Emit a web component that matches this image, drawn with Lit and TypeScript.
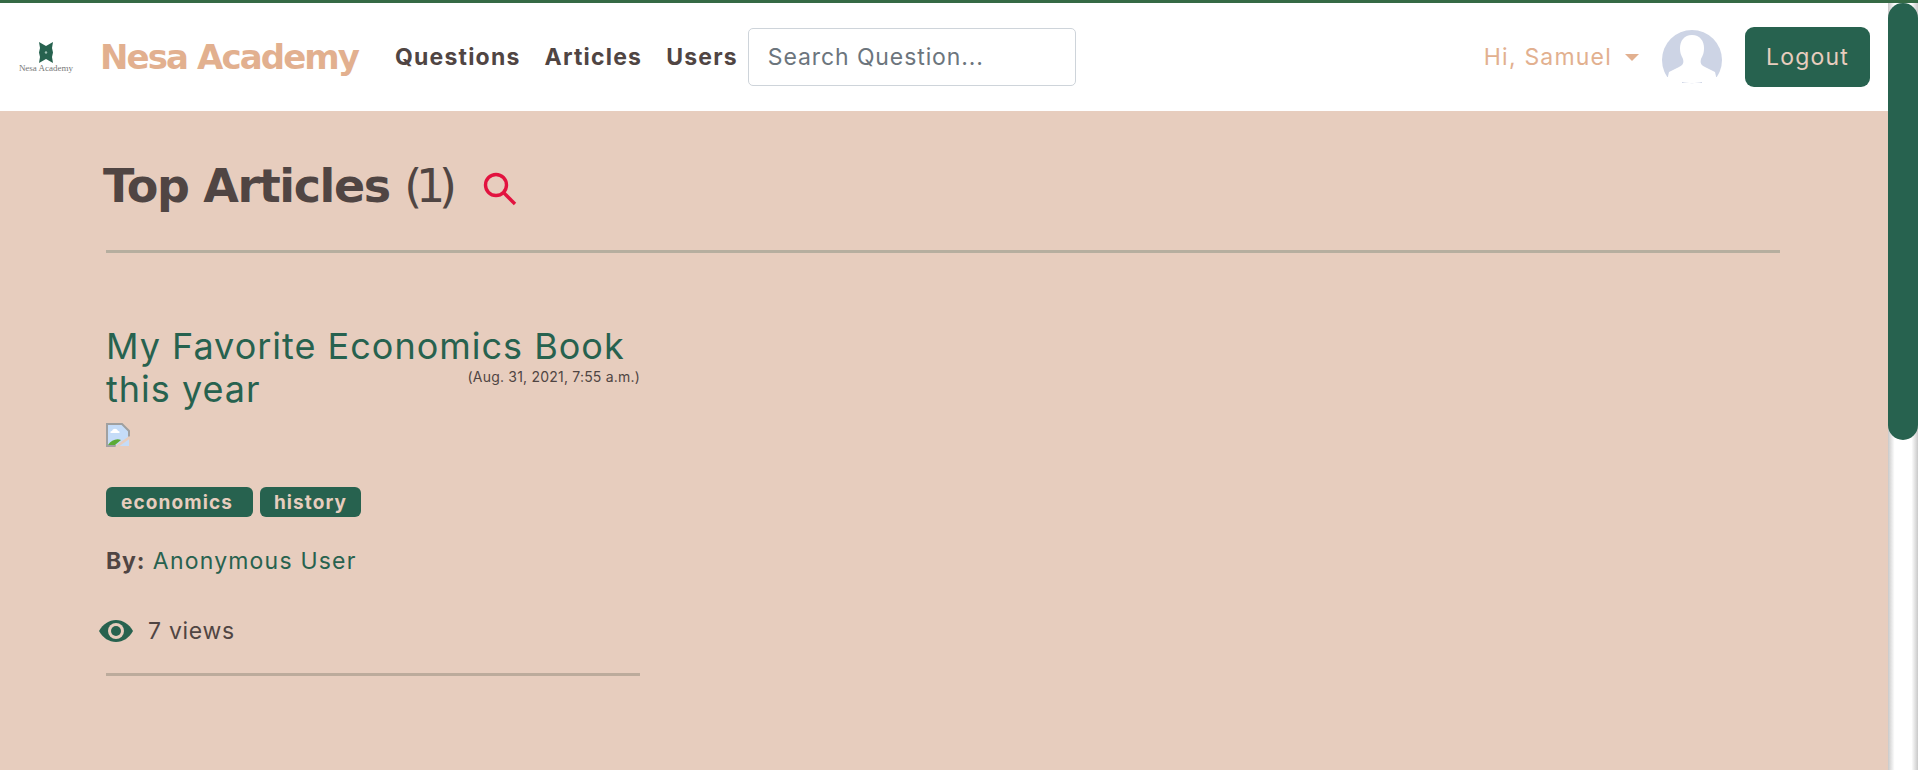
import { LitElement, html, css } from "lit";
import { customElement } from "lit/decorators.js";

@customElement("app-root")
export class AppRoot extends LitElement {
  static styles = css`
    :host { display: block; position: relative; width: 1918px; height: 770px; overflow: hidden; background: #e7cdbe; font-family: Inter, "Open Sans", sans-serif; color: #504543; }
    .top { height: 3px; background: #356a45; }
    nav { height: 108px; background: #fff; display: flex; align-items: center; padding: 0 48px 0 18px; box-sizing: border-box; }
    .logo { width: 56px; display: flex; flex-direction: column; align-items: center; margin-right: 26px; }
    .logo svg { display: block; }
    .logo span { font: 9px/10px "Liberation Serif", serif; color: #777; white-space: nowrap; }
    .brand { font: bold 34px/1 "DejaVu Sans", sans-serif; color: #e2b08f; width: 259px; margin-right: 36px; white-space: nowrap; letter-spacing: -1.9px; }
    .link { font-weight: 700; font-size: 23px; letter-spacing: 1.2px; color: #504543; margin-right: 24px; white-space: nowrap; }
    .link.last { margin-right: 10px; }
    .search { width: 328px; height: 58px; box-sizing: border-box; border: 1px solid #ced4da; border-radius: 5px; padding: 0 19px; display: flex; align-items: center; font-size: 23px; letter-spacing: 0.9px; color: #6c757d; }
    .spacer { flex: 1; }
    .hi { font-size: 23px; letter-spacing: 1.2px; color: #e2b08f; white-space: nowrap; display: flex; align-items: center; }
    .caret { width: 0; height: 0; border: 7px solid transparent; border-top-color: #e2b08f; border-bottom: 0; margin-left: 13px; }
    .avatar { margin: 0 23px 0 23px; display: block; }
    .logout { width: 125px; height: 60px; border-radius: 9px; background: #27624f; color: #e7cdbe; font-size: 23px; letter-spacing: 1.2px; display: flex; align-items: center; justify-content: center; }
    main { padding: 46px 138px 0 106px; }
    .head { display: flex; align-items: center; height: 64px; }
    h1 { margin: -7px 0 0 -3px; font: bold 46px/64px "DejaVu Sans", sans-serif; letter-spacing: -1.4px; color: #504543; white-space: nowrap; }
    h1 span { font-weight: normal; letter-spacing: -6.3px; margin-left: 0; }
    .head svg { margin-left: 32px; display: block; }
    .rule { height: 3px; background: #b6ae9f; }
    .head + .rule { margin-top: 29px; }
    article { width: 534px; margin-top: 72px; position: relative; }
    h2 { margin: 0; font-weight: 400; font-size: 36px; line-height: 43px; letter-spacing: 1px; color: #27624f; }
    .date { position: absolute; right: 0; top: 43px; font-size: 14px; line-height: 18px; letter-spacing: 0.2px; color: #504543; }
    .broken { display: block; margin-top: 12px; }
    .tags { display: flex; gap: 7px; margin-top: 40px; }
    .tag { height: 30px; border-radius: 6px; background: #27624f; color: #e7cdbe; font-weight: 700; font-size: 19px; letter-spacing: 1.1px; display: flex; align-items: center; justify-content: center; box-sizing: border-box; }
    .tag.wide { width: 147px; padding-right: 5px; }
    .tag.narrow { width: 101px; }
    .by { margin-top: 29px; font-size: 23px; line-height: 30px; letter-spacing: 1.2px; color: #27624f; }
    .by b { color: #504543; letter-spacing: 0.8px; }
    .views { display: flex; align-items: center; margin: 40px 0 0 -7px; font-size: 23px; line-height: 30px; letter-spacing: 0.7px; color: #504543; }
    .views svg { margin-right: 15px; display: block; }
    .views + .rule { margin-top: 27px; background: #bcab9c; }
    .track { position: absolute; top: 3px; right: 0; bottom: 0; width: 30px; background: linear-gradient(90deg, #c9c9c9, #fff 22%, #fff 78%, #c9c9c9); }
    .thumb { height: 437px; background: #27624f; border-radius: 15px; }
  `;

  render() {
    return html`
      <div class="top"></div>
      <nav>
        <div class="logo">
          <svg width="14" height="21" viewBox="0 0 14 21"><path fill="#27624f" d="M0 0L7 4 14 0 13 6 14 10.5 13 15 14 21 7 17 0 21 1 15 0 10.5 1 6z"/><circle cx="7" cy="10.5" r="1.2" fill="#9fc0b4"/></svg>
          <span>Nesa Academy</span>
        </div>
        <div class="brand">Nesa Academy</div>
        <div class="link">Questions</div>
        <div class="link">Articles</div>
        <div class="link last">Users</div>
        <div class="search">Search Question...</div>
        <div class="spacer"></div>
        <div class="hi">Hi, Samuel<i class="caret"></i></div>
        <svg class="avatar" width="60" height="56" viewBox="0 0 60 56">
          <defs><clipPath id="c"><path d="M0 0h60v48H0z"/></clipPath></defs>
          <circle cx="30" cy="31" r="30" fill="#cdd4e5" clip-path="url(#c)"/>
          <path fill="#fff" d="M30 6c8 0 12 6 12 13 0 5-1 7-3 11-1 4 0 6 4 8l10 5 3 13H4l3-13 10-5c4-2 5-4 4-8-2-4-3-6-3-11 0-7 4-13 12-13z"/>
          <path fill="#cdd4e5" d="M20 53c6 1.5 14 1.5 20 0v1H20z"/>
        </svg>
        <div class="logout">Logout</div>
      </nav>
      <main>
        <div class="head">
          <h1>Top Articles <span>(1)</span></h1>
          <svg width="34" height="34" viewBox="0 0 34 34" fill="none" stroke="#e2133f" stroke-width="3.4"><circle cx="13" cy="13" r="10.5"/><path d="M20.5 20.5L32 32"/></svg>
        </div>
        <div class="rule"></div>
        <article>
          <h2>My Favorite Economics Book this year</h2>
          <div class="date">(Aug. 31, 2021, 7:55 a.m.)</div>
          <svg class="broken" width="24" height="24" viewBox="0 0 24 24">
            <path fill="#c5dcf8" d="M1 1h15l7 7v15H1z"/>
            <path fill="none" stroke="#a0a0a0" stroke-width="2" d="M23 14V8l-7-7H1v22h9"/>
            <path fill="#fff" d="M6 8c1-3 5-3 6 0 2 0 2 2 1 2H5c-1 0-1-2 1-2z"/>
            <path fill="#5cab35" d="M2 22c3-5 9-7 13-5l-6 5z"/>
            <path stroke="#e7cdbe" stroke-width="2.5" d="M10 24l14-10"/>
          </svg>
          <div class="tags">
            <div class="tag wide">economics</div>
            <div class="tag narrow">history</div>
          </div>
          <div class="by"><b>By:</b> Anonymous User</div>
          <div class="views">
            <svg width="34" height="22" viewBox="0 0 34 22"><path fill="#27624f" d="M0 11C4 4 10 0 17 0s13 4 17 11c-4 7-10 11-17 11S4 18 0 11z"/><circle cx="17" cy="11" r="8" fill="#e7cdbe"/><circle cx="17" cy="11" r="5" fill="#27624f"/></svg>
            7 views
          </div>
          <div class="rule"></div>
        </article>
      </main>
      <div class="track"><div class="thumb"></div></div>
    `;
  }
}
